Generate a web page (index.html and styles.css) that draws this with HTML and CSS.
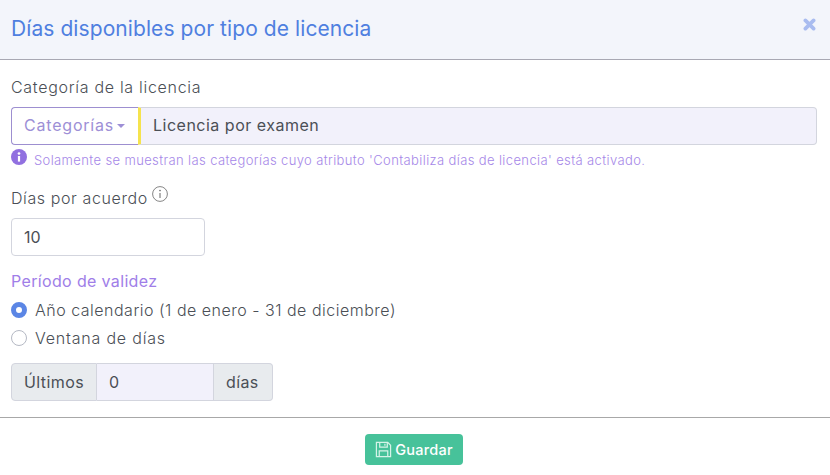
FILE: index.html
```html
<!DOCTYPE html>
<html lang="es">
<head>
    <meta charset="UTF-8">
    <meta name="viewport" content="width=device-width, initial-scale=1.0">
    <title>Días disponibles por tipo de licencia</title>
    <link rel="stylesheet" href="styles.css">
</head>
<body>
    <div class="modal">
        <header class="modal-header">
            <h1>Días disponibles por tipo de licencia</h1>
            <button type="button" class="close" aria-label="Cerrar">
                <svg viewBox="0 0 12 12" width="13" height="13"><path d="M2.2 2.2 9.8 9.8M9.8 2.2 2.2 9.8" stroke="#a9bcf0" stroke-width="3.4" stroke-linecap="round"/></svg>
            </button>
        </header>
        <form class="modal-body">
            <label class="label">Categoría de la licencia</label>
            <div class="category-group">
                <button type="button" class="category-btn">Categorías<span class="caret"></span></button>
                <input class="category-input" type="text" value="Licencia por examen" readonly>
            </div>
            <div class="hint">
                <svg viewBox="0 0 16 16" width="16" height="16"><circle cx="8" cy="8" r="8" fill="#9170e0"/><rect x="6.9" y="7" width="2.2" height="5.6" fill="#fff"/><circle cx="8" cy="4.5" r="1.35" fill="#fff"/></svg>
                <small>Solamente se muestran las categorías cuyo atributo 'Contabiliza días de licencia' está activado.</small>
            </div>
            <div class="label agreement">Días por acuerdo
                <svg viewBox="0 0 16 16" width="16" height="16"><circle cx="8" cy="8" r="7.4" fill="none" stroke="#666" stroke-width=".8"/><path d="M8 7v5" stroke="#666" stroke-width="1"/><circle cx="8" cy="4.6" r=".8" fill="#666"/></svg>
            </div>
            <input class="days-input" type="text" value="10">
            <div class="section-title">Período de validez</div>
            <div class="radio-row"><span class="radio checked"></span>Año calendario (1 de enero - 31 de diciembre)</div>
            <div class="radio-row"><span class="radio"></span><span class="window-label">Ventana de días</span></div>
            <div class="window-group">
                <span class="addon first">Últimos</span>
                <input class="window-input" type="text" value="0">
                <span class="addon last">días</span>
            </div>
        </form>
        <footer class="modal-footer">
            <button type="button" class="save">
                <svg viewBox="0 0 18 18" width="17" height="17" fill="none" stroke="#d6f3e8" stroke-width="1.3"><path d="M1.5 1.5h12l3 3v12h-15z"/><path d="M5 1.5v5h8v-5M4.5 16.5v-6h9v6"/><path d="M10.5 3v2"/></svg>
                Guardar
            </button>
        </footer>
    </div>
</body>
</html>
```

FILE: styles.css
```css
* {
    box-sizing: border-box;
}
body {
    margin: 0;
    background-color: white;
    font-family: "Inter", "Open Sans", sans-serif;
    font-weight: 300;
    color: #4b4f56;
}
.modal {
    width: 830px;
    height: 475px;
    display: flex;
    flex-direction: column;
}
.modal-header {
    height: 60px;
    display: flex;
    justify-content: space-between;
    background-color: #f3f5fb;
    border-bottom: 1px solid #a8a8b3;
    padding: 17px 14px 0 11px;
}
h1 {
    margin: 0;
    font-size: 21px;
    line-height: 24px;
    font-weight: 400;
    letter-spacing: 0.08px;
    color: #4f7fe0;
}
.close {
    border: none;
    background: none;
    padding: 0;
    height: 13px;
    margin-top: 1px;
}
.modal-body {
    height: 357px;
    padding: 17px 13px 0 11px;
    display: flex;
    flex-direction: column;
    align-items: flex-start;
}
.label {
    font-size: 16px;
    line-height: 20px;
    letter-spacing: 0.7px;
}
.category-group {
    display: flex;
    width: 100%;
    height: 38px;
    margin-top: 10px;
}
.category-btn {
    width: 127px;
    border: 1px solid #9d8fd0;
    border-right: none;
    border-radius: 4px 0 0 4px;
    background-color: white;
    color: #9d8fd6;
    font: inherit;
    font-size: 16px;
    font-weight: 400;
    letter-spacing: 0.8px;
    padding: 0 0 2px 12px;
    text-align: left;
    white-space: nowrap;
}
.caret {
    display: inline-block;
    margin-left: 3px;
    vertical-align: 3px;
    border-top: 4px solid #9d8fd6;
    border-left: 4px solid transparent;
    border-right: 4px solid transparent;
}
.category-input {
    flex: 1;
    min-width: 0;
    border: 1px solid #d3d5de;
    border-left: 3px solid #f5e34e;
    border-radius: 0 4px 4px 0;
    background-color: #f2f1fb;
    color: #4b4f56;
    font: inherit;
    font-size: 16px;
    font-weight: 400;
    letter-spacing: 0.5px;
    padding: 0 0 2px 12px;
    outline: none;
}
.hint {
    display: flex;
    gap: 7px;
    margin-top: 4px;
    height: 20px;
}
.hint small {
    font-size: 13px;
    line-height: 18px;
    letter-spacing: 0.38px;
    padding-top: 2px;
    color: #a688e8;
}
.agreement {
    display: flex;
    gap: 4px;
    margin-top: 19px;
    letter-spacing: 0.6px;
}
.agreement svg {
    margin-top: -2px;
}
.days-input {
    width: 194px;
    height: 38px;
    margin-top: 10px;
    border: 1px solid #d3d5de;
    border-radius: 4px;
    background-color: white;
    color: #4b4f56;
    font: inherit;
    font-size: 16px;
    font-weight: 400;
    padding: 0 12px;
    outline: none;
}
.section-title {
    margin-top: 15px;
    font-size: 16px;
    line-height: 20px;
    font-weight: 400;
    letter-spacing: 0.35px;
    color: #a07ee8;
}
.radio-row {
    display: flex;
    align-items: center;
    gap: 8px;
    font-size: 16px;
    line-height: 20px;
    letter-spacing: 0.5px;
    margin-top: 9px;
}
.radio-row + .radio-row {
    margin-top: 8px;
}
.window-label {
    letter-spacing: 0.8px;
}
.radio {
    width: 16px;
    height: 16px;
    border: 1px solid #b5b9c4;
    border-radius: 50%;
    background-color: white;
}
.radio.checked {
    border: 5px solid #5b86e5;
}
.window-group {
    display: flex;
    height: 38px;
    margin-top: 15px;
    font-size: 16px;
}
.addon {
    display: flex;
    align-items: center;
    background-color: #e8ebee;
    border: 1px solid #d3d5de;
    padding: 0 12px;
    font-weight: 400;
    letter-spacing: 0.4px;
}
.addon.first {
    width: 86px;
    border-radius: 4px 0 0 4px;
}
.addon.last {
    width: 59px;
    border-left: none;
    border-radius: 0 4px 4px 0;
}
.window-input {
    width: 117px;
    border: 1px solid #d3d5de;
    border-left: none;
    border-right: 1px solid #d3d5de;
    background-color: #f2f1fb;
    color: #4b4f56;
    font: inherit;
    font-weight: 400;
    padding: 0 12px;
    outline: none;
}
.modal-footer {
    flex: 1;
    display: flex;
    justify-content: center;
    border-top: 1px solid #a8a8a8;
    padding: 16px 2px 0 0;
}
.save {
    display: flex;
    align-items: center;
    gap: 3px;
    width: 98px;
    height: 31px;
    justify-content: center;
    padding: 0;
    border: none;
    border-radius: 4px;
    background-color: #47c29a;
    color: white;
    font: inherit;
    font-size: 14.5px;
    font-weight: 500;
    letter-spacing: 0.25px;
}
```
